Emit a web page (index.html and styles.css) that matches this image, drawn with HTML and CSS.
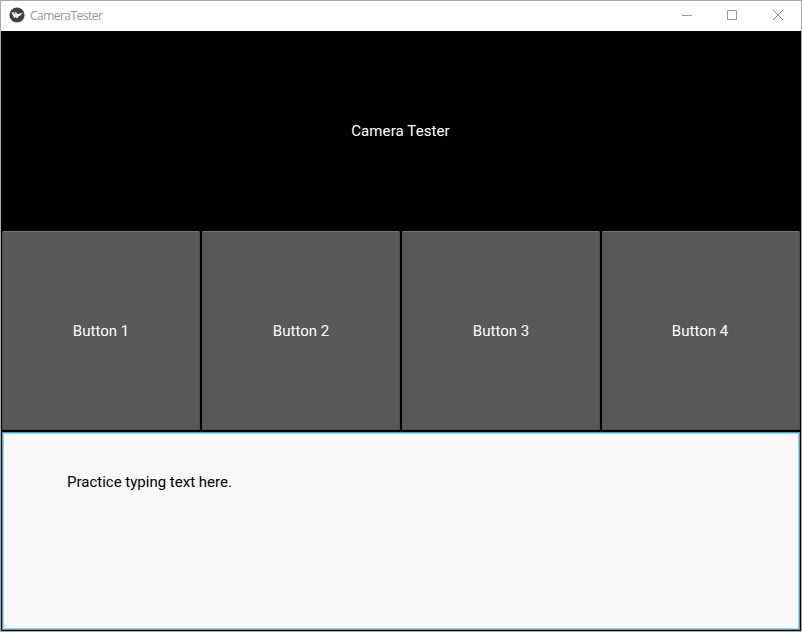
FILE: index.html
```html
<!DOCTYPE html>
<html lang="en">
<head>
<meta charset="utf-8">
<title>CameraTester</title>
<link rel="stylesheet" href="styles.css">
</head>
<body>
<div class="window">
  <header class="titlebar">
    <svg class="logo" width="16" height="16" viewBox="0 0 16 16"><circle cx="8" cy="8" r="7.6" fill="#3d4042"/><path d="M2.600 5.400 4.800 5l1.200 1.900.4-2.100 2.200 2.300 5.200-1.200-2.600 2.700-1.700.7-1.300 2.200-1.300-1.500-1.700 1z" fill="#fff"/><path d="m4.300 5.500 1.400 4M6.400 6l.8 3.500" stroke="#85888a" stroke-width=".5"/></svg>
    <span class="title"><span class="title-text">CameraTester</span></span>
    <div class="controls">
      <svg width="46" height="30" viewBox="0 0 46 30"><path d="M18 14.5h10" stroke="#999"/></svg>
      <svg width="45" height="30" viewBox="0 0 45 30"><path d="M17.500 9.500h9v9h-9z" fill="none" stroke="#999"/></svg>
      <svg width="46" height="30" viewBox="0 0 46 30"><path d="m18 9 10 10m0-10-10 10" stroke="#8c8c8c"/></svg>
    </div>
  </header>
  <main class="app">
    <div class="label">Camera Tester</div>
    <div class="buttons">
      <button>Button 1</button>
      <button>Button 2</button>
      <button>Button 3</button>
      <button>Button 4</button>
    </div>
    <div class="input">Practice typing text here.</div>
  </main>
</div>
</body>
</html>
```
FILE: styles.css
```css
* { box-sizing: border-box; }
body { margin: 0; }
.window {
  width: 802px;
  height: 632px;
  border: 1px solid #aaa;
  background: #000;
  overflow: hidden;
}
.titlebar {
  height: 30px;
  background: #fff;
  display: flex;
  align-items: center;
  padding-left: 8px;
}
.logo { margin-bottom: 2px; }
.title {
  flex: 1;
  margin-left: 5px;
  font: 12px/28px "Open Sans", sans-serif;
  color: #999;
}
.title-text { letter-spacing: -0.53px; }
.controls { display: flex; }
.controls svg { display: block; }
.app {
  height: 600px;
  display: grid;
  grid-template-rows: repeat(3, 200px);
  font: 15px/18px Roboto, sans-serif;
}
.label {
  display: flex;
  align-items: center;
  justify-content: center;
  padding-right: 1px;
  letter-spacing: 0.1px;
  color: #fff;
}
.buttons {
  display: grid;
  grid-template-columns: repeat(4, 1fr);
  gap: 2px;
  padding: 0 1px 1px;
}
.buttons button {
  border: 1px solid #4d4d4d;
  border-top-color: #777;
  border-radius: 1.5px;
  background: #585858;
  color: #fff;
  font: inherit;
  padding: 0;
}
.buttons button:last-child { padding-right: 2px; }
.input {
  margin: 1px;
  border: 1px solid #2fa9da;
  background: #f9f9f9;
  box-shadow: inset -1px -1px #c8c8c8, inset 1px 1px #a5d5e8;
  padding: 40px 64px;
  color: #000;
}
```
